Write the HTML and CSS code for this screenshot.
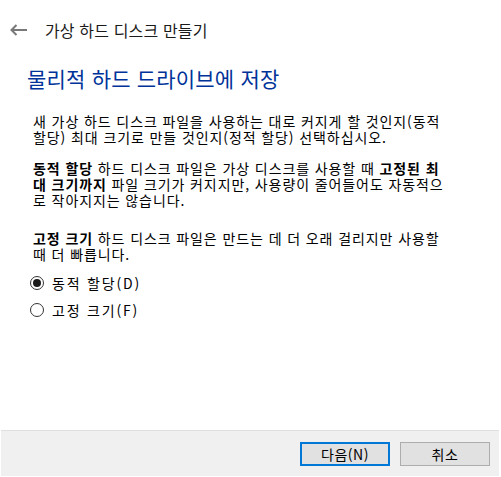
FILE: index.html
```html
<!DOCTYPE html>
<html lang="ko">
<head>
<meta charset="utf-8">
<link rel="stylesheet" href="styles.css">
</head>
<body>
<div class="window">
  <div class="titlebar">
    <svg class="back" width="18" height="12" viewBox="0 0 18 12"><path d="M1.5 6 H17 M6.5 1 L1.5 6 L6.5 11" fill="none" stroke="#787878" stroke-width="2"/></svg>
    <span class="title">가상 하드 디스크 만들기</span>
  </div>
  <div class="content">
    <h1 class="heading">물리적 하드 드라이브에 저장</h1>
    <p class="para p1">새 가상 하드 디스크 파일을 사용하는 대로 커지게 할 것인지(동적<br>할당) 최대 크기로 만들 것인지(정적 할당) 선택하십시오.</p>
    <p class="para p2"><b>동적 할당</b> 하드 디스크 파일은 가상 디스크를 사용할 때 <b>고정된 최<br>대 크기까지</b> 파일 크기가 커지지만, 사용량이 줄어들어도 자동적으<br>로 작아지지는 않습니다.</p>
    <p class="para p3"><b>고정 크기</b> 하드 디스크 파일은 만드는 데 더 오래 걸리지만 사용할<br>때 더 빠릅니다.</p>
    <div class="options">
      <label class="radio"><span class="dot checked"></span>동적 할당(D)</label>
      <label class="radio"><span class="dot"></span>고정 크기(F)</label>
    </div>
  </div>
  <div class="footer">
    <button class="btn primary">다음(N)</button>
    <button class="btn">취소</button>
  </div>
</div>
</body>
</html>
```
FILE: styles.css
```css
html, body {
  margin: 0;
  padding: 0;
  background: #ffffff;
}
body {
  width: 501px;
  height: 477px;
  font-family: "Noto Sans CJK KR", "Noto Sans", sans-serif;
  color: #000;
}
.window {
  display: flex;
  flex-direction: column;
  width: 501px;
  height: 477px;
}
.titlebar {
  display: flex;
  align-items: center;
  height: 60px;
  padding-left: 10px;
  box-sizing: border-box;
}
.back {
  margin-right: 17px;
}
.title {
  font-size: 16px;
  letter-spacing: 0.15px;
  color: #1a1a1a;
}
.content {
  flex: 1;
  padding: 0 0 0 33px;
}
.heading {
  margin: 4px 0 0 -6px;
  font-size: 21px;
  letter-spacing: 0.2px;
  font-weight: normal;
  color: #003399;
  line-height: 28px;
}
.para {
  margin: 0;
  font-size: 14px;
  letter-spacing: 0.9px;
  line-height: 16px;
  white-space: nowrap;
}
.p1 {
  margin-top: 21px;
}
.p2 {
  margin-top: 15px;
}
.p3 {
  margin-top: 22px;
}
.options {
  display: flex;
  flex-direction: column;
  gap: 9px;
  margin-top: 12px;
  margin-left: -3px;
}
.radio {
  display: flex;
  align-items: center;
  font-size: 14px;
  letter-spacing: 1.8px;
  line-height: 18px;
}
.dot {
  width: 14px;
  height: 14px;
  border: 1px solid #333;
  border-radius: 50%;
  margin-right: 8px;
  box-sizing: border-box;
  position: relative;
}
.dot.checked::after {
  content: "";
  position: absolute;
  left: 2px;
  top: 2px;
  width: 8px;
  height: 8px;
  border-radius: 50%;
  background: #1a1a1a;
}
.footer {
  margin: 0 2px 1px 1px;
  height: 46px;
  background: #f0f0f0;
  border-top: 1px solid #dfdfdf;
  display: flex;
  justify-content: flex-end;
  align-items: center;
  gap: 10px;
  padding-right: 9px;
  box-sizing: border-box;
}
.btn {
  width: 90px;
  height: 24px;
  background: #e1e1e1;
  border: 1px solid #adadad;
  font-family: "Noto Sans CJK KR", sans-serif;
  font-size: 14px;
  letter-spacing: 0.5px;
  color: #000;
  padding: 0;
}
.btn.primary {
  border: 2px solid #0078d7;
}
```
